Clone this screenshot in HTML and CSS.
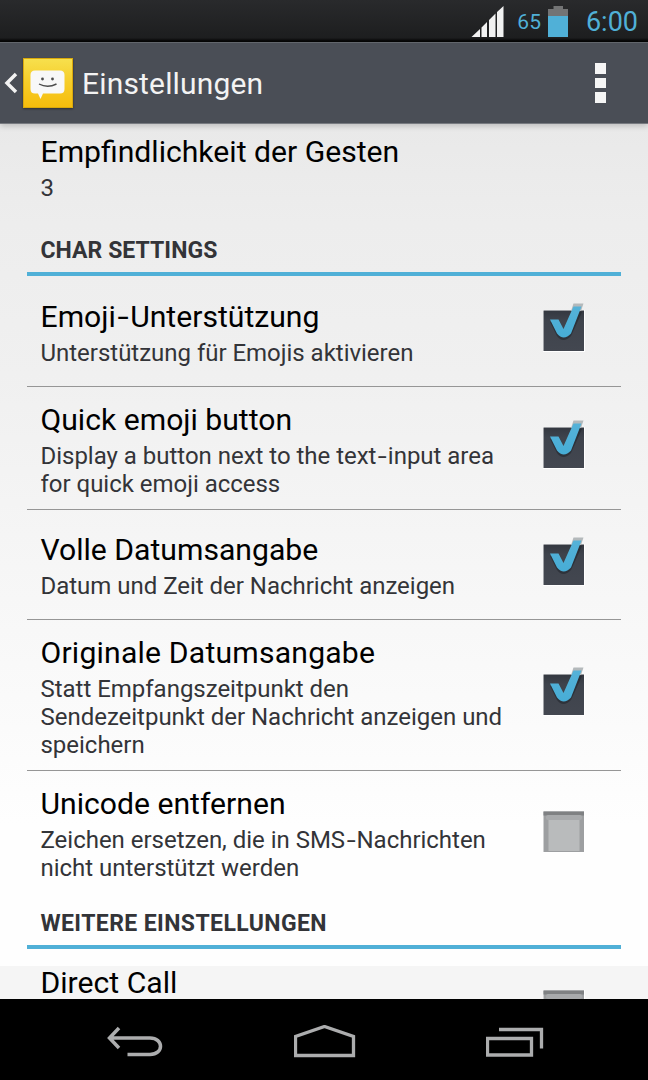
FILE: index.html
```html
<!DOCTYPE html>
<html lang="de">
<head>
    <meta charset="UTF-8">
    <meta name="viewport" content="width=device-width, initial-scale=1.0">
    <title>Einstellungen</title>
    <link rel="stylesheet" href="styles.css">
</head>
<body>

    <!-- shared checkbox drawings -->
    <svg class="defs" width="0" height="0">
        <defs>
            <linearGradient id="tick" x1="0" y1="0" x2="0" y2="1">
                <stop offset="0" stop-color="#55b2d8"/>
                <stop offset="1" stop-color="#47add6"/>
            </linearGradient>
            <linearGradient id="box" x1="0" y1="0" x2="0" y2="1">
                <stop offset="0" stop-color="#343840"/>
                <stop offset="0.25" stop-color="#3e434c"/>
                <stop offset="1" stop-color="#434750"/>
            </linearGradient>
        </defs>
        <symbol id="check-on" viewBox="0 0 42 50">
            <rect x="0" y="8" width="42" height="42" fill="#fff"/>
            <rect x="0.5" y="8.5" width="40.5" height="40.5" fill="url(#box)"/>
            <path d="M7 20H15L21 30L30 10H39L28 34Q20 42 14 34Z" fill="#22262d" opacity="0.6"/>
            <path d="M30.500 1.500H40.500L38 9H28Z" fill="#b4b9bb"/>
            <path d="M7 17.500H15.500L20.500 27L30.500 4.500H38.500L28 31.500Q20.500 39.500 14 31.500Z" fill="url(#tick)"/>
        </symbol>
        <symbol id="check-off" viewBox="0 0 42 50">
            <rect x="0" y="8" width="42" height="42" fill="#fff"/>
            <rect x="0.5" y="8.5" width="40.5" height="40.5" fill="#9d9fa1"/>
            <rect x="0.5" y="8.5" width="40.5" height="4" fill="#7f8183"/>
            <rect x="3" y="12" width="36" height="5" rx="2" fill="#a8aaac"/>
            <rect x="5.5" y="17" width="31" height="31" fill="#b9bbbc"/>
        </symbol>
    </svg>

    <div class="screen">
        <div class="status-bar">
            <svg class="signal" width="34" height="32" viewBox="0 0 34 32">
                <path d="M0.500 31L9 23V31ZM10.500 31V21.500L16 16V31ZM18 31V14L24.500 7.500V31ZM26 31V6L32.500 0V31Z" fill="#f1f1f1"/>
            </svg>
            <span class="percent">65</span>
            <svg class="battery" width="20" height="31" viewBox="0 0 20 31">
                <path d="M0 3H5.500V0H15V3H20V10H0Z" fill="#737475"/>
                <path d="M0 10H20V31H0Z" fill="#50b0d7"/>
            </svg>
            <span class="clock">6:00</span>
        </div>

        <div class="action-bar">
            <svg class="back" width="14" height="22" viewBox="0 0 14 22">
                <path d="M12 2L3 11L12 20" fill="none" stroke="#f3f3f3" stroke-width="3.500"/>
            </svg>
            <div class="app-icon">
                <svg width="36" height="30" viewBox="0 0 36 30">
                    <path d="M5 0.500H30Q34.500 0.500 34.500 5V19Q34.500 23.500 30 23.500H13L10.500 29L8 23.500H5Q0.500 23.500 0.500 19V5Q0.500 0.500 5 0.500Z" fill="#f8f8f8"/>
                    <circle cx="12.500" cy="9" r="1.400" fill="#4c4c4c"/>
                    <circle cx="22.500" cy="9" r="1.400" fill="#4c4c4c"/>
                    <path d="M9 14Q17.500 18.500 26.500 14" fill="none" stroke="#4c4c4c" stroke-width="1.400"/>
                </svg>
            </div>
            <h1>Einstellungen</h1>
            <div class="overflow">
                <span></span>
                <span></span>
                <span></span>
            </div>
        </div>

        <div class="settings">
            <div class="row row-first">
                <div class="text">
                    <div class="title">Empfindlichkeit der Gesten</div>
                    <div class="summary">3</div>
                </div>
            </div>

            <h2>CHAR SETTINGS</h2>

            <div class="row row-emoji">
                <div class="text">
                    <div class="title">Emoji<span class="hyphen">-</span>Unterstützung</div>
                    <div class="summary">Unterstützung für Emojis aktivieren</div>
                </div>
                <svg class="checkbox" width="42" height="50"><use href="#check-on"/></svg>
            </div>
            <div class="row row-two">
                <div class="text">
                    <div class="title">Quick emoji button</div>
                    <div class="summary">Display a button next to the text<span class="hyphen">-</span>input area<br>for quick emoji access</div>
                </div>
                <svg class="checkbox" width="42" height="50"><use href="#check-on"/></svg>
            </div>
            <div class="row row-date">
                <div class="text">
                    <div class="title">Volle Datumsangabe</div>
                    <div class="summary">Datum und Zeit der Nachricht anzeigen</div>
                </div>
                <svg class="checkbox" width="42" height="50"><use href="#check-on"/></svg>
            </div>
            <div class="row row-three">
                <div class="text">
                    <div class="title wide">Originale Datumsangabe</div>
                    <div class="summary">Statt Empfangszeitpunkt den<br>Sendezeitpunkt der Nachricht anzeigen und<br>speichern</div>
                </div>
                <svg class="checkbox" width="42" height="50"><use href="#check-on"/></svg>
            </div>
            <div class="row row-last">
                <div class="text">
                    <div class="title">Unicode entfernen</div>
                    <div class="summary">Zeichen ersetzen, die in SMS<span class="hyphen">-</span>Nachrichten<br>nicht unterstützt werden</div>
                </div>
                <svg class="checkbox" width="42" height="50"><use href="#check-off"/></svg>
            </div>

            <h2 class="wide">WEITERE EINSTELLUNGEN</h2>

            <div class="row row-cut">
                <div class="text">
                    <div class="title">Direct Call</div>
                </div>
                <svg class="checkbox" width="42" height="50"><use href="#check-off"/></svg>
            </div>
        </div>

        <div class="nav-bar">
            <svg width="58" height="34" viewBox="0 0 58 34">
                <path d="M13 3L3.500 13L13 23M3.500 13H44C58 13 58 29.500 44 29.500H21.500" fill="none" stroke="#acadae" stroke-width="3.500"/>
            </svg>
            <svg width="62" height="34" viewBox="0 0 62 34">
                <path d="M1.500 30.500V11.500L30.500 1.500L59.500 11.500V30.500Z" fill="none" stroke="#acadae" stroke-width="3.300"/>
            </svg>
            <svg width="58" height="34" viewBox="0 0 58 34">
                <path d="M1.500 13.500H45.500V30H1.500ZM13 4.500H55.500V23.500" fill="none" stroke="#acadae" stroke-width="3.300"/>
            </svg>
        </div>
    </div>

</body>
</html>
```

FILE: styles.css
```css
:root {
    --blue: #50b0d7;
    --bar: #4a4e56;
}

* {
    box-sizing: border-box;
}

body {
    margin: 0;
    font-family: Roboto, 'Liberation Sans', sans-serif;
    background: #000;
}

.defs {
    display: block;
}

.screen {
    display: flex;
    flex-direction: column;
    width: 648px;
    height: 1080px;
    overflow: hidden;
}

/* status bar */
.status-bar {
    display: flex;
    align-items: center;
    justify-content: flex-end;
    flex: none;
    height: 42px;
    padding-right: 10px;
    color: var(--blue);
    background: linear-gradient(#292a2c, #1d1e1f 38px, #050505 41px);
}

.signal {
    margin-top: 2px;
}

.percent {
    margin: 2px 0 0 12px;
    font-size: 21px;
}

.battery {
    margin: 1px 1px 0 7px;
}

.clock {
    margin: 2px 0 0 17px;
    font-size: 27px;
}

/* action bar */
.action-bar {
    display: flex;
    align-items: center;
    flex: none;
    height: 82px;
    padding-left: 4px;
    background: var(--bar);
    border-top: 1px solid #62666c;
    border-bottom: 1px solid #777a80;
    box-shadow: 0 2px 6px rgba(0, 0, 0, 0.2);
    z-index: 1;
}

.app-icon {
    display: flex;
    align-items: center;
    justify-content: center;
    width: 50px;
    height: 50px;
    margin-left: 5px;
    padding-top: 4px;
    background: linear-gradient(#f7e04d, #f6ce2b 45%, #f6bd0c);
    border: 1px solid #d9a90c;
    box-shadow: 0 1px 2px rgba(0, 0, 0, 0.4);
}

h1 {
    flex: 1;
    margin: 0 0 0 9px;
    font-size: 30px;
    font-weight: 400;
    letter-spacing: 0.17px;
    color: #f3f3f3;
}

.overflow {
    display: flex;
    flex-direction: column;
    gap: 4px;
    margin-right: 42px;
}

.overflow span {
    width: 11px;
    height: 10.5px;
    background: #f5f5f5;
}

/* preference list */
.settings {
    flex: 1;
    min-height: 0;
    padding: 0 27px;
    overflow: hidden;
    background: linear-gradient(#e9e9e9, #ededed 100px, #f0f0f0 250px, #fefefe 700px, #fefefe 842px, #f5f5f5 842px);
}

.row {
    display: flex;
    align-items: center;
    height: 110px;
    padding: 0 36px 0 13.5px;
    border-bottom: 1px solid #969696;
}

.row-emoji {
    height: 111px;
}

.row-date .text {
    margin-bottom: -2px;
}

.row-two {
    height: 123px;
}

.row-three {
    height: 151px;
}

.row-first {
    height: 103px;
    border-bottom: 0;
    align-items: flex-start;
    padding-top: 10px;
}

.row-last {
    height: 129px;
    padding-bottom: 8px;
    border-bottom: 0;
}

.row-cut {
    height: 110px;
    align-items: flex-start;
    padding-top: 16px;
}

.text {
    flex: 1;
    margin-bottom: -4px;
    white-space: nowrap;
}

.title {
    font-size: 30.15px;
    line-height: 36px;
    color: #000;
}

.title.wide {
    letter-spacing: 0.2px;
}

.summary {
    margin-top: 4px;
    font-size: 24px;
    line-height: 28px;
    letter-spacing: -0.02px;
    color: #333438;
}

.hyphen {
    display: inline-block;
    margin: 0 0.1em;
    transform: scaleX(1.35);
}

.checkbox {
    flex: none;
    margin-top: -8px;
}

.row-cut .checkbox {
    margin-top: 17px;
}

h2 {
    height: 49px;
    margin: 0;
    padding: 10px 13.5px 0;
    font-size: 23px;
    line-height: 28px;
    font-weight: 700;
    letter-spacing: 0.05px;
    color: #333438;
    border-bottom: 4px solid var(--blue);
}

h2.wide {
    letter-spacing: 0.4px;
}

/* navigation bar */
.nav-bar {
    display: flex;
    align-items: center;
    justify-content: space-between;
    flex: none;
    height: 81px;
    padding: 4px 104px 0 106px;
    background: #000;
}
```
